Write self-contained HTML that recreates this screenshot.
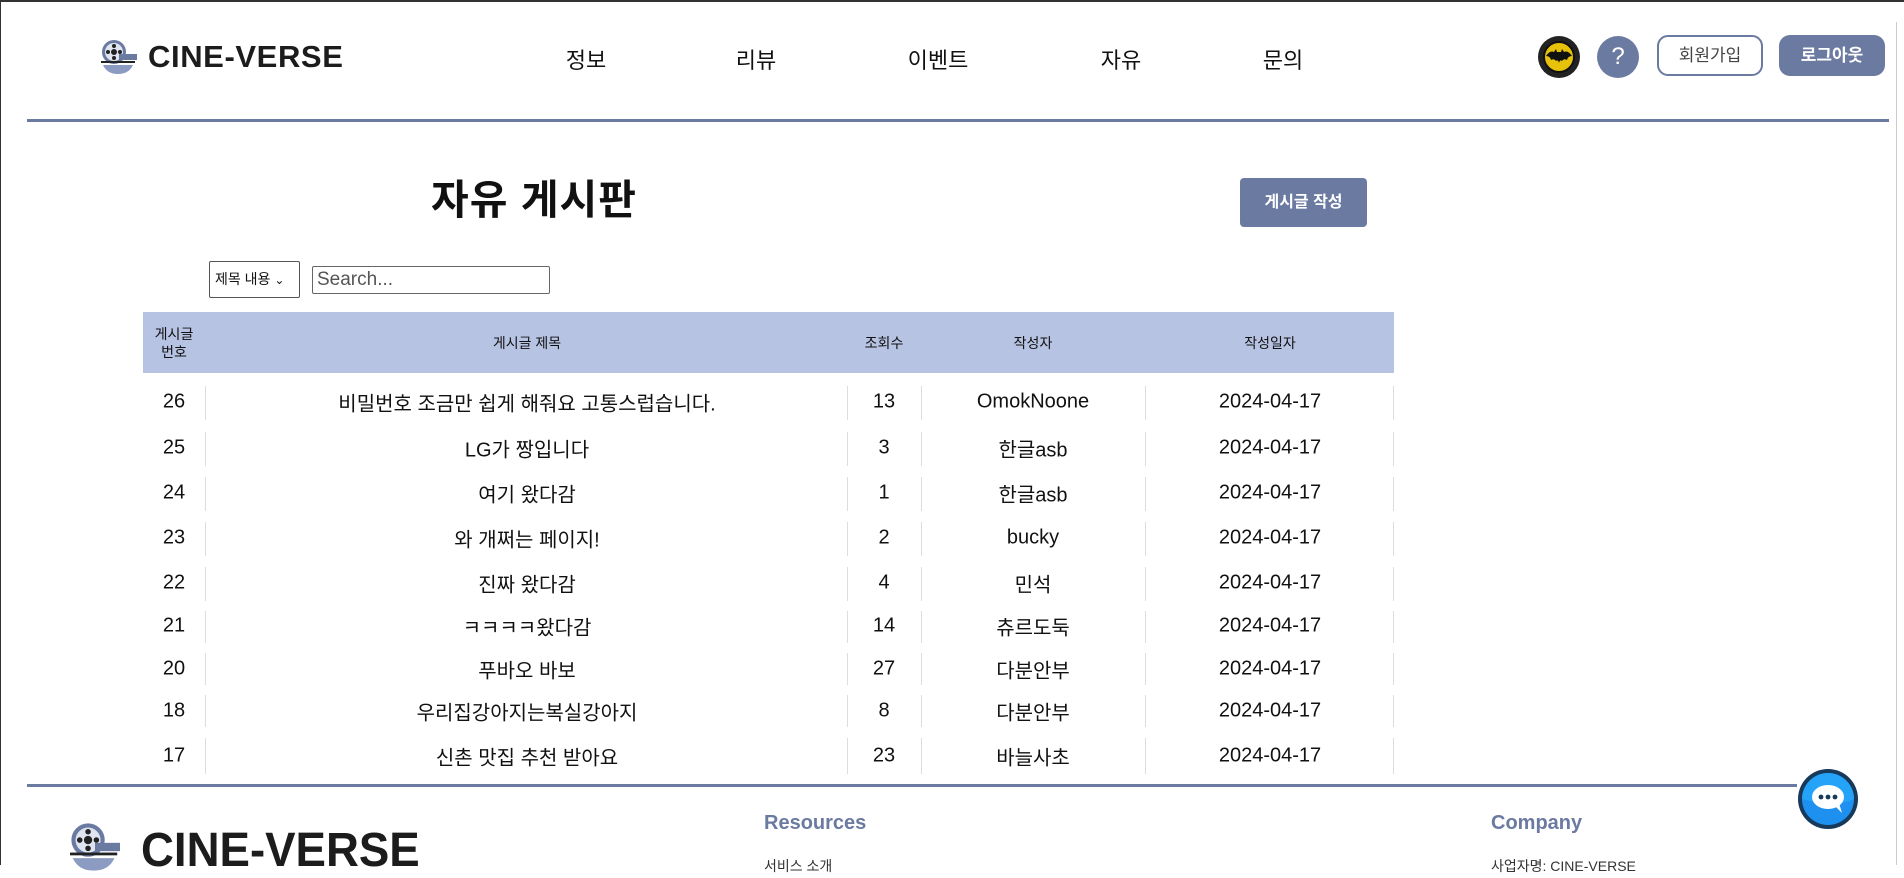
<!DOCTYPE html>
<html><head><meta charset="utf-8">
<style>
*{margin:0;padding:0;box-sizing:border-box}
body{width:1904px;height:865px;overflow:hidden;background:#fff;position:relative;font-family:"Liberation Sans","Noto Sans CJK KR",sans-serif;color:#111}
.a{position:absolute}
.frame-top{left:0;top:0;width:1904px;height:2px;background:#333}
.frame-left{left:0;top:0;width:1px;height:865px;background:#333}
.sb{left:1896px;top:22px;width:1px;height:843px;background:#ccc}
.nav{top:43px;font-size:22px;transform:translateX(-50%);color:#111}
.hl{left:27px;top:119px;width:1862px;height:3px;background:#6b7aa1}
.th{top:312px;height:61px;display:flex;align-items:center;justify-content:center;text-align:center;font-size:14px;line-height:18px;transform:translateX(-50%)}
.cell{font-size:20px;transform:translate(-50%,-50%);white-space:nowrap}
.vl{width:1px;background:#ddd}
</style></head><body>
<div class="a frame-top"></div><div class="a frame-left"></div><div class="a sb"></div>

<svg class="a" style="left:99px;top:39px" width="40" height="36" viewBox="0 0 40 36">
<circle cx="15" cy="13" r="12" fill="#6b7aa1"/><circle cx="15" cy="13" r="9" fill="#dfe4f0"/>
<circle cx="15" cy="13" r="3" fill="#222"/>
<g fill="#222"><circle cx="15" cy="7" r="2"/><circle cx="15" cy="19" r="2"/><circle cx="9" cy="13" r="2"/><circle cx="21" cy="13" r="2"/></g>
<rect x="20" y="15" width="18" height="6" fill="#6b7aa1"/>
<rect x="2" y="22" width="34" height="2" fill="#222"/>
<path d="M4 26 H34 Q30 35 19 35 Q8 35 4 26Z" fill="#8c9bc2"/>
</svg>
<div class="a" style="left:148px;top:39px;font-size:31px;font-weight:bold;color:#1c1c1c;letter-spacing:0.6px">CINE-VERSE</div>

<div class="a nav" style="left:586px">정보</div>
<div class="a nav" style="left:756px">리뷰</div>
<div class="a nav" style="left:938px">이벤트</div>
<div class="a nav" style="left:1121px">자유</div>
<div class="a nav" style="left:1283px">문의</div>

<svg class="a" style="left:1538px;top:36px" width="42" height="42" viewBox="0 0 42 42">
<circle cx="21" cy="21" r="21" fill="#222"/><circle cx="21" cy="21" r="15" fill="#e6c20a"/>
<circle cx="21" cy="21" r="15" fill="none" stroke="#111" stroke-width="2"/>
<path d="M8 20 Q12 14 16 16 L18 13 L19 16 L23 16 L24 13 L26 16 Q30 14 34 20 Q30 20 29 24 Q26 22 24 25 Q22 23 21 27 Q20 23 18 25 Q16 22 13 24 Q12 20 8 20Z" fill="#111"/>
</svg>
<div class="a" style="left:1597px;top:36px;width:42px;height:42px;border-radius:50%;background:#6b7aa1;color:#fff;font-size:24px;text-align:center;line-height:42px">?</div>
<div class="a" style="left:1657px;top:35px;width:106px;height:41px;border:2px solid #6b7aa1;border-radius:11px;text-align:center;line-height:37px;font-size:17px;color:#444">회원가입</div>
<div class="a" style="left:1779px;top:35px;width:106px;height:41px;background:#6b7aa1;border-radius:11px;text-align:center;line-height:41px;font-size:17px;font-weight:bold;color:#fff">로그아웃</div>

<div class="a hl"></div>

<div class="a" style="left:431px;top:166px;font-size:41px;font-weight:bold;letter-spacing:1px">자유 게시판</div>
<div class="a" style="left:1240px;top:178px;width:127px;height:49px;background:#6b7aa1;border-radius:4px;color:#fff;font-weight:bold;font-size:16px;text-align:center;line-height:49px">게시글 작성</div>

<div class="a" style="left:209px;top:261px;width:91px;height:37px;border:1px solid #555;border-radius:2px;font-size:14px;line-height:35px;padding-left:5px">제목 내용 <span style="font-size:12px">⌄</span></div>
<div class="a" style="left:312px;top:266px;width:238px;height:28px;border:1px solid #666;border-radius:2px;font-size:19px;line-height:26px;padding-left:4px;color:#555">Search...</div>

<div class="a" style="left:143px;top:312px;width:1251px;height:61px;background:#b7c3e3"></div>
<div class="a th" style="left:174px">게시글<br>번호</div>
<div class="a th" style="left:527px">게시글 제목</div>
<div class="a th" style="left:884px">조회수</div>
<div class="a th" style="left:1033px">작성자</div>
<div class="a th" style="left:1270px">작성일자</div>

<div class="a vl" style="left:205px;top:386px;height:34px"></div><div class="a vl" style="left:847px;top:386px;height:34px"></div><div class="a vl" style="left:921px;top:386px;height:34px"></div><div class="a vl" style="left:1145px;top:386px;height:34px"></div><div class="a vl" style="left:1393px;top:386px;height:34px"></div>
<div class="a cell" style="left:174px;top:402px">26</div><div class="a cell" style="left:527px;top:402px">비밀번호 조금만 쉽게 해줘요 고통스럽습니다.</div><div class="a cell" style="left:884px;top:402px">13</div><div class="a cell" style="left:1033px;top:402px">OmokNoone</div><div class="a cell" style="left:1270px;top:402px">2024-04-17</div>

<div class="a vl" style="left:205px;top:432px;height:34px"></div><div class="a vl" style="left:847px;top:432px;height:34px"></div><div class="a vl" style="left:921px;top:432px;height:34px"></div><div class="a vl" style="left:1145px;top:432px;height:34px"></div><div class="a vl" style="left:1393px;top:432px;height:34px"></div>
<div class="a cell" style="left:174px;top:448px">25</div><div class="a cell" style="left:527px;top:448px">LG가 짱입니다</div><div class="a cell" style="left:884px;top:448px">3</div><div class="a cell" style="left:1033px;top:448px">한글asb</div><div class="a cell" style="left:1270px;top:448px">2024-04-17</div>

<div class="a vl" style="left:205px;top:477px;height:34px"></div><div class="a vl" style="left:847px;top:477px;height:34px"></div><div class="a vl" style="left:921px;top:477px;height:34px"></div><div class="a vl" style="left:1145px;top:477px;height:34px"></div><div class="a vl" style="left:1393px;top:477px;height:34px"></div>
<div class="a cell" style="left:174px;top:493px">24</div><div class="a cell" style="left:527px;top:493px">여기 왔다감</div><div class="a cell" style="left:884px;top:493px">1</div><div class="a cell" style="left:1033px;top:493px">한글asb</div><div class="a cell" style="left:1270px;top:493px">2024-04-17</div>

<div class="a vl" style="left:205px;top:522px;height:34px"></div><div class="a vl" style="left:847px;top:522px;height:34px"></div><div class="a vl" style="left:921px;top:522px;height:34px"></div><div class="a vl" style="left:1145px;top:522px;height:34px"></div><div class="a vl" style="left:1393px;top:522px;height:34px"></div>
<div class="a cell" style="left:174px;top:538px">23</div><div class="a cell" style="left:527px;top:538px">와 개쩌는 페이지!</div><div class="a cell" style="left:884px;top:538px">2</div><div class="a cell" style="left:1033px;top:538px">bucky</div><div class="a cell" style="left:1270px;top:538px">2024-04-17</div>

<div class="a vl" style="left:205px;top:567px;height:34px"></div><div class="a vl" style="left:847px;top:567px;height:34px"></div><div class="a vl" style="left:921px;top:567px;height:34px"></div><div class="a vl" style="left:1145px;top:567px;height:34px"></div><div class="a vl" style="left:1393px;top:567px;height:34px"></div>
<div class="a cell" style="left:174px;top:583px">22</div><div class="a cell" style="left:527px;top:583px">진짜 왔다감</div><div class="a cell" style="left:884px;top:583px">4</div><div class="a cell" style="left:1033px;top:583px">민석</div><div class="a cell" style="left:1270px;top:583px">2024-04-17</div>

<div class="a vl" style="left:205px;top:611px;height:32px"></div><div class="a vl" style="left:847px;top:611px;height:32px"></div><div class="a vl" style="left:921px;top:611px;height:32px"></div><div class="a vl" style="left:1145px;top:611px;height:32px"></div><div class="a vl" style="left:1393px;top:611px;height:32px"></div>
<div class="a cell" style="left:174px;top:626px">21</div><div class="a cell" style="left:527px;top:626px">ㅋㅋㅋㅋ왔다감</div><div class="a cell" style="left:884px;top:626px">14</div><div class="a cell" style="left:1033px;top:626px">츄르도둑</div><div class="a cell" style="left:1270px;top:626px">2024-04-17</div>

<div class="a vl" style="left:205px;top:653px;height:32px"></div><div class="a vl" style="left:847px;top:653px;height:32px"></div><div class="a vl" style="left:921px;top:653px;height:32px"></div><div class="a vl" style="left:1145px;top:653px;height:32px"></div><div class="a vl" style="left:1393px;top:653px;height:32px"></div>
<div class="a cell" style="left:174px;top:669px">20</div><div class="a cell" style="left:527px;top:669px">푸바오 바보</div><div class="a cell" style="left:884px;top:669px">27</div><div class="a cell" style="left:1033px;top:669px">다분안부</div><div class="a cell" style="left:1270px;top:669px">2024-04-17</div>

<div class="a vl" style="left:205px;top:695px;height:32px"></div><div class="a vl" style="left:847px;top:695px;height:32px"></div><div class="a vl" style="left:921px;top:695px;height:32px"></div><div class="a vl" style="left:1145px;top:695px;height:32px"></div><div class="a vl" style="left:1393px;top:695px;height:32px"></div>
<div class="a cell" style="left:174px;top:711px">18</div><div class="a cell" style="left:527px;top:711px">우리집강아지는복실강아지</div><div class="a cell" style="left:884px;top:711px">8</div><div class="a cell" style="left:1033px;top:711px">다분안부</div><div class="a cell" style="left:1270px;top:711px">2024-04-17</div>

<div class="a vl" style="left:205px;top:738px;height:36px"></div><div class="a vl" style="left:847px;top:738px;height:36px"></div><div class="a vl" style="left:921px;top:738px;height:36px"></div><div class="a vl" style="left:1145px;top:738px;height:36px"></div><div class="a vl" style="left:1393px;top:738px;height:36px"></div>
<div class="a cell" style="left:174px;top:756px">17</div><div class="a cell" style="left:527px;top:756px">신촌 맛집 추천 받아요</div><div class="a cell" style="left:884px;top:756px">23</div><div class="a cell" style="left:1033px;top:756px">바늘사초</div><div class="a cell" style="left:1270px;top:756px">2024-04-17</div>

<div class="a" style="left:27px;top:784px;width:1770px;height:3px;background:#6b7aa1"></div>
<svg class="a" style="left:64px;top:822px" width="62" height="50" viewBox="0 0 40 36">
<circle cx="15" cy="13" r="12" fill="#6b7aa1"/><circle cx="15" cy="13" r="9" fill="#dfe4f0"/>
<circle cx="15" cy="13" r="3" fill="#222"/>
<g fill="#222"><circle cx="15" cy="7" r="2"/><circle cx="15" cy="19" r="2"/><circle cx="9" cy="13" r="2"/><circle cx="21" cy="13" r="2"/></g>
<rect x="20" y="15" width="18" height="6" fill="#6b7aa1"/>
<rect x="2" y="22" width="34" height="2" fill="#222"/>
<path d="M4 26 H34 Q30 35 19 35 Q8 35 4 26Z" fill="#8c9bc2"/>
</svg>
<div class="a" style="left:141px;top:823px;font-size:48px;font-weight:bold;color:#1c1c1c;transform:scaleX(0.95);transform-origin:left">CINE-VERSE</div>
<div class="a" style="left:764px;top:812px;font-size:20px;color:#6b7aa1;font-weight:bold">Resources</div>
<div class="a" style="left:764px;top:856px;font-size:14px;color:#333">서비스 소개</div>
<div class="a" style="left:1491px;top:812px;font-size:20px;color:#6b7aa1;font-weight:bold">Company</div>
<div class="a" style="left:1491px;top:856px;font-size:14px;color:#333">사업자명: CINE-VERSE</div>

<svg class="a" style="left:1797px;top:768px" width="62" height="62" viewBox="0 0 62 62">
<circle cx="31" cy="31" r="30" fill="#173a5a"/>
<circle cx="31" cy="31" r="26" fill="#1e90f0"/>
<path d="M5 31 A26 26 0 0 1 57 31 Q40 40 5 31Z" fill="#2ab0ff" opacity="0.6"/>
<ellipse cx="31" cy="29" rx="16" ry="12" fill="#fff"/>
<path d="M38 38 L45 45 L42 35Z" fill="#fff"/>
<circle cx="24" cy="29" r="2.4" fill="#173a5a"/><circle cx="31" cy="29" r="2.4" fill="#173a5a"/><circle cx="38" cy="29" r="2.4" fill="#173a5a"/>
</svg>
</body></html>
